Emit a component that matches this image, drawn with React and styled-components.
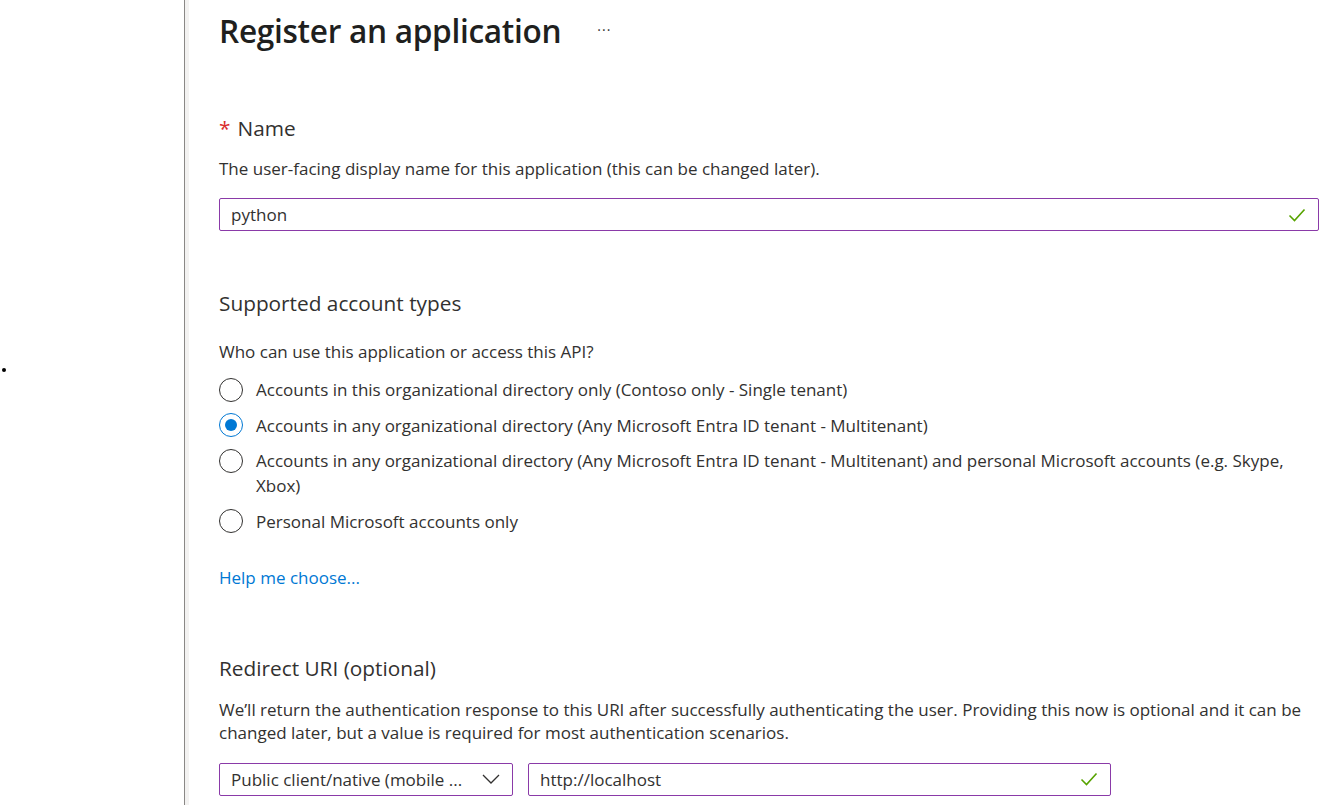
import React from 'react';
import styled, { createGlobalStyle } from 'styled-components';

const GlobalStyle = createGlobalStyle`
  html, body {
    margin: 0;
    padding: 0;
    background: #ffffff;
  }

  body {
    font-family: 'Open Sans', 'Noto Sans', sans-serif;
    color: #323130;
  }
`;

const Page = styled.div`
  display: flex;
  width: 1322px;
  height: 805px;
  overflow: hidden;
`;

const LeftPane = styled.aside`
  width: 185px;
  flex: none;
  border-right: 1px solid #8a8886;
  padding-top: 368px;
  box-sizing: border-box;
`;

const Bullet = styled.span`
  display: block;
  width: 4px;
  height: 4px;
  margin-left: 2px;
  border-radius: 50%;
  background: #000;
`;

const Gutter = styled.div`
  width: 4px;
  flex: none;
  background: #f3f2f1;
`;

const Main = styled.main`
  flex: 1;
  min-width: 0;
  padding: 10px 0 0 30px;
`;

const TitleRow = styled.div`
  display: flex;
  align-items: center;
  gap: 36px;
  height: 40px;
`;

const Title = styled.h1`
  margin: 0;
  font-size: 31.6px;
  font-weight: 600;
  letter-spacing: -0.3px;
  color: #201f1e;
`;

const More = styled.span`
  font-size: 14px;
  color: #323130;
  letter-spacing: 1px;
  margin-top: -2px;
`;

const Section = styled.section`
  margin-top: ${(p) => p.$top}px;
`;

const Heading = styled.h2`
  margin: 0;
  font-size: 20.8px;
  font-weight: 400;
  line-height: 28px;
  color: #323130;
`;

const Required = styled.span`
  color: #d92c2c;
  margin-right: 7px;
`;

const Text = styled.p`
  margin: ${(p) => p.$top || 0}px 0 0;
  font-size: 17px;
  line-height: 23px;
  color: #323130;
  max-width: 1088px;
`;

const Field = styled.div`
  display: flex;
  align-items: center;
  justify-content: space-between;
  box-sizing: border-box;
  height: 33px;
  width: ${(p) => p.$width}px;
  margin-top: ${(p) => p.$top || 0}px;
  padding: 0 12px 0 11px;
  border: 1px solid #8a3aa8;
  border-radius: 2px;
  font-size: 17px;
  color: #323130;
  flex: none;
`;

const Options = styled.div`
  display: flex;
  flex-direction: column;
  gap: 10.5px;
  margin-top: 14px;
`;

const Option = styled.label`
  display: flex;
  align-items: flex-start;
  gap: 13px;
  font-size: 17px;
  line-height: 25px;
  max-width: 1095px;
`;

const Radio = styled.span`
  flex: none;
  box-sizing: border-box;
  width: 24px;
  height: 24px;
  margin-top: 0.5px;
  border-radius: 50%;
  border: 1.5px solid ${(p) => (p.$checked ? '#0078d4' : '#323130')};
  display: flex;
  align-items: center;
  justify-content: center;

  &::after {
    content: '';
    width: 12px;
    height: 12px;
    border-radius: 50%;
    background: ${(p) => (p.$checked ? '#0078d4' : 'transparent')};
  }
`;

const HelpLink = styled.a`
  display: block;
  width: max-content;
  margin-top: 32px;
  font-size: 17px;
  line-height: 23px;
  color: #0078d4;
  text-decoration: none;
`;

const UriRow = styled.div`
  display: flex;
  gap: 15px;
  margin-top: 19px;
`;

const Check = () => (
  <svg width="18" height="14" viewBox="0 0 18 14">
    <path d="M1.5 7.5 L6.5 12.5 L16.5 1.5" fill="none" stroke="#57a300" strokeWidth="1.6" />
  </svg>
);

const Chevron = () => (
  <svg width="18" height="10" viewBox="0 0 18 10">
    <path d="M1 1 L9 9 L17 1" fill="none" stroke="#323130" strokeWidth="1.3" />
  </svg>
);

const accountTypes = [
  { label: 'Accounts in this organizational directory only (Contoso only - Single tenant)' },
  { label: 'Accounts in any organizational directory (Any Microsoft Entra ID tenant - Multitenant)', checked: true },
  {
    label:
      'Accounts in any organizational directory (Any Microsoft Entra ID tenant - Multitenant) and personal Microsoft accounts (e.g. Skype, Xbox)',
  },
  { label: 'Personal Microsoft accounts only' },
];

const App = () => (
  <Page>
    <GlobalStyle />
    <LeftPane>
      <Bullet />
    </LeftPane>
    <Gutter />
    <Main>
      <TitleRow>
        <Title>Register an application</Title>
        <More>···</More>
      </TitleRow>

      <Section $top={64}>
        <Heading>
          <Required>*</Required>Name
        </Heading>
        <Text $top={15}>The user-facing display name for this application (this can be changed later).</Text>
        <Field $width={1100} $top={18}>
          python
          <Check />
        </Field>
      </Section>

      <Section $top={58}>
        <Heading>Supported account types</Heading>
        <Text $top={23}>Who can use this application or access this API?</Text>
        <Options>
          {accountTypes.map((t) => (
            <Option key={t.label}>
              <Radio $checked={t.checked} />
              {t.label}
            </Option>
          ))}
        </Options>
        <HelpLink href="#">Help me choose...</HelpLink>
      </Section>

      <Section $top={65}>
        <Heading>Redirect URI (optional)</Heading>
        <Text $top={16}>
          We’ll return the authentication response to this URI after successfully authenticating the user. Providing
          this now is optional and it can be changed later, but a value is required for most authentication scenarios.
        </Text>
        <UriRow>
          <Field $width={294}>
            Public client/native (mobile ...
            <Chevron />
          </Field>
          <Field $width={583}>
            http://localhost
            <Check />
          </Field>
        </UriRow>
      </Section>
    </Main>
  </Page>
);

export default App;
